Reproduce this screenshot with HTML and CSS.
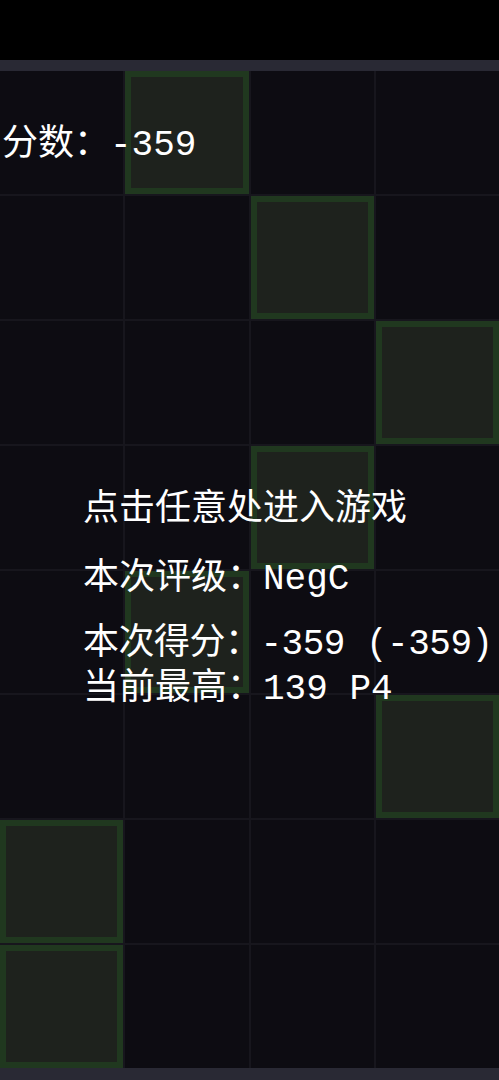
FILE: index.html
```html
<!DOCTYPE html>
<html lang="zh">
<head>
<meta charset="utf-8">
<title>游戏</title>
<link rel="stylesheet" href="styles.css">
</head>
<body>
<div class="screen">
  <div class="topbar"></div>
  <div class="band"></div>
  <div class="board">
    <div class="cell"></div><div class="cell lit"></div><div class="cell"></div><div class="cell"></div>
    <div class="cell"></div><div class="cell"></div><div class="cell lit"></div><div class="cell"></div>
    <div class="cell"></div><div class="cell"></div><div class="cell"></div><div class="cell lit"></div>
    <div class="cell"></div><div class="cell"></div><div class="cell lit"></div><div class="cell"></div>
    <div class="cell"></div><div class="cell lit"></div><div class="cell"></div><div class="cell"></div>
    <div class="cell"></div><div class="cell"></div><div class="cell"></div><div class="cell lit"></div>
    <div class="cell lit"></div><div class="cell"></div><div class="cell"></div><div class="cell"></div>
    <div class="cell lit"></div><div class="cell"></div><div class="cell"></div><div class="cell"></div>
  </div>
  <div class="band"></div>
  <div class="score">分数：-359</div>
  <div class="overlay">
    <div class="line l1">点击任意处进入游戏</div>
    <div class="line l2">本次评级：NegC</div>
    <div class="line l3">本次得分：-359 (-359)</div>
    <div class="line l4">当前最高：139 P4</div>
  </div>
</div>
</body>
</html>
```
FILE: styles.css
```css
html, body {
  margin: 0;
  padding: 0;
  background: #000;
}
.screen {
  position: relative;
  width: 499px;
  height: 1080px;
  overflow: hidden;
  font-family: "Liberation Mono", "Noto Sans CJK SC", sans-serif;
  color: #fff;
}
.topbar {
  height: 60px;
  background: #000;
}
.band {
  height: 11px;
  background: #292934;
}
.board {
  height: 997px;
  display: grid;
  grid-template-columns: repeat(4, 1fr);
  grid-template-rows: repeat(8, 1fr);
  gap: 2px;
  background: #17161d;
}
.board + .band {
  height: 12px;
}
.cell {
  background: #0d0c12;
}
.cell.lit {
  background: #1e221d;
  border: 6px solid #20381f;
}
.score {
  position: absolute;
  left: 2px;
  top: 128px;
  font-size: 36px;
  line-height: 36px;
  white-space: nowrap;
}
.overlay {
  position: absolute;
  left: 83px;
  top: 493px;
  font-size: 36px;
  line-height: 36px;
  white-space: nowrap;
}
.line {
  height: 36px;
}
.l1 { margin-bottom: 33px; }
.l2 { margin-bottom: 29px; }
.l3 { margin-bottom: 9px; letter-spacing: -0.5px; }
```
